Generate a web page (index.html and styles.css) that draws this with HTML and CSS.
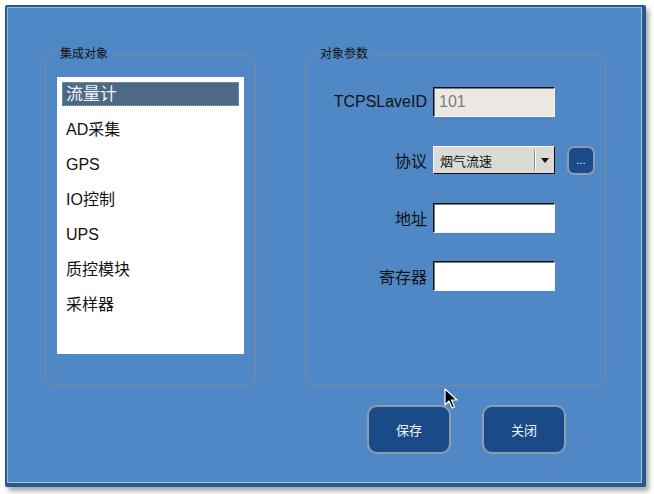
FILE: index.html
```html
<!DOCTYPE html>
<html>
<head>
<meta charset="utf-8">
<link rel="stylesheet" href="styles.css">
</head>
<body>
<div class="window">
  <div class="panels">
    <fieldset class="group group-left">
      <legend>集成对象</legend>
      <ul class="list">
        <li class="item selected">流量计</li>
        <li class="item">AD采集</li>
        <li class="item">GPS</li>
        <li class="item">IO控制</li>
        <li class="item">UPS</li>
        <li class="item">质控模块</li>
        <li class="item">采样器</li>
      </ul>
    </fieldset>
    <fieldset class="group group-right">
      <legend>对象参数</legend>
      <div class="form">
        <label class="lbl">TCPSLaveID</label>
        <div class="input disabled">101</div>
        <span></span>

        <label class="lbl">协议</label>
        <div class="combo">
          <span class="combo-text">烟气流速</span>
          <span class="combo-sep"></span>
          <span class="combo-arrow"></span>
        </div>
        <button class="more">...</button>

        <label class="lbl">地址</label>
        <div class="input"></div>
        <span></span>

        <label class="lbl">寄存器</label>
        <div class="input"></div>
        <span></span>
      </div>
    </fieldset>
  </div>
  <div class="actions">
    <button class="btn">保存</button>
    <button class="btn">关闭</button>
  </div>
</div>
<svg class="cursor" width="14" height="22" viewBox="0 0 14 22">
  <path d="M1 1 L1 17 L5 13 L8 20 L10.5 19 L7.5 12 L13 12 Z" fill="#000" stroke="#fff" stroke-width="1.2" stroke-linejoin="round"/>
</svg>
</body>
</html>
```

FILE: styles.css
```css
* { box-sizing: border-box; }
html, body { margin: 0; padding: 0; background: #ffffff; }
body {
  width: 654px;
  height: 494px;
  position: relative;
  font-family: "Liberation Sans", "Noto Sans CJK SC", sans-serif;
  color: #111;
}
.window {
  position: absolute;
  left: 5px;
  top: 5px;
  width: 641px;
  height: 482px;
  background: #5088c6;
  border-style: solid;
  border-color: #2b5789;
  border-width: 2px 4px 4px 2px;
  border-radius: 2px;
  box-shadow: inset 1px 1px 0 #8db6e6, inset -1px -1px 0 #a6c8ee, 3px 4px 5px rgba(0,0,0,0.35);
  display: flex;
  flex-direction: column;
  padding: 39px 0 0 38px;
}
.panels {
  display: flex;
  gap: 49px;
}
.group {
  margin: 0;
  height: 340px;
  border: 1px solid #7e8896;
  border-radius: 9px;
  padding: 0;
}
.group legend {
  font-size: 12px;
  line-height: 16px;
  height: 16px;
  padding: 0 4px;
  margin-left: 10px;
  color: #111;
}
.group-left { width: 211px; }
.group-right { width: 301px; }

.list {
  list-style: none;
  margin: 15px 0 0 11px;
  padding: 5px;
  width: 187px;
  height: 277px;
  background: #fff;
}
.item {
  height: 24px;
  line-height: 24px;
  padding-left: 3px;
  margin-bottom: 11px;
  font-size: 16px;
  color: #111;
  border: 1px solid transparent;
}
.item.selected {
  background: #4c6a86;
  color: #f2f4f6;
  border: 1px dotted #8ea2b6;
  font-size: 17px;
}

.form {
  margin-top: 25px;
  display: grid;
  grid-template-columns: 121px 122px 40px;
  grid-auto-rows: 30px;
  column-gap: 6px;
  row-gap: 28px;
  align-items: center;
}
.lbl {
  justify-self: end;
  font-size: 16px;
  color: #111;
}
.input {
  width: 122px;
  height: 30px;
  background: #fff;
  border-style: solid;
  border-width: 1px;
  border-color: #111 #f4f4f4 #f4f4f4 #111;
  box-shadow: inset 1px 1px 0 #7a7a7a;
  font-size: 16px;
  line-height: 28px;
  padding-left: 5px;
}
.input.disabled {
  background: #ece9e4;
  color: #7d7d7d;
}
.combo {
  width: 122px;
  height: 28px;
  background: #dcdad5;
  border-style: solid;
  border-width: 1px;
  border-color: #f6f6f4 #111 #111 #f6f6f4;
  display: flex;
  align-items: center;
  padding-left: 6px;
}
.combo-text {
  font-size: 13px;
  flex: 1;
}
.combo-sep {
  width: 2px;
  height: 20px;
  border-left: 1px solid #8a8a8a;
  border-right: 1px solid #fff;
  margin-right: 5px;
}
.combo-arrow {
  width: 0;
  height: 0;
  border-left: 4px solid transparent;
  border-right: 4px solid transparent;
  border-top: 5px solid #111;
  margin-right: 5px;
}
.more {
  justify-self: start;
  margin-left: 6px;
  width: 28px;
  height: 29px;
  background: #1b4b89;
  border: 2px solid #8d9cb0;
  border-radius: 7px;
  color: #fff;
  font-family: "Liberation Sans", sans-serif;
  font-size: 11px;
  padding: 0;
  line-height: 20px;
}
.actions {
  display: flex;
  gap: 31px;
  margin-top: 19px;
  padding-left: 322px;
}
.btn {
  width: 84px;
  height: 49px;
  background: #1b4a88;
  border: 2px solid #8d9cb0;
  border-radius: 10px;
  color: #f2f4f8;
  font-family: "Liberation Sans", "Noto Sans CJK SC", sans-serif;
  font-size: 13px;
  padding: 0;
}
.cursor {
  position: absolute;
  left: 444px;
  top: 388px;
}
```
